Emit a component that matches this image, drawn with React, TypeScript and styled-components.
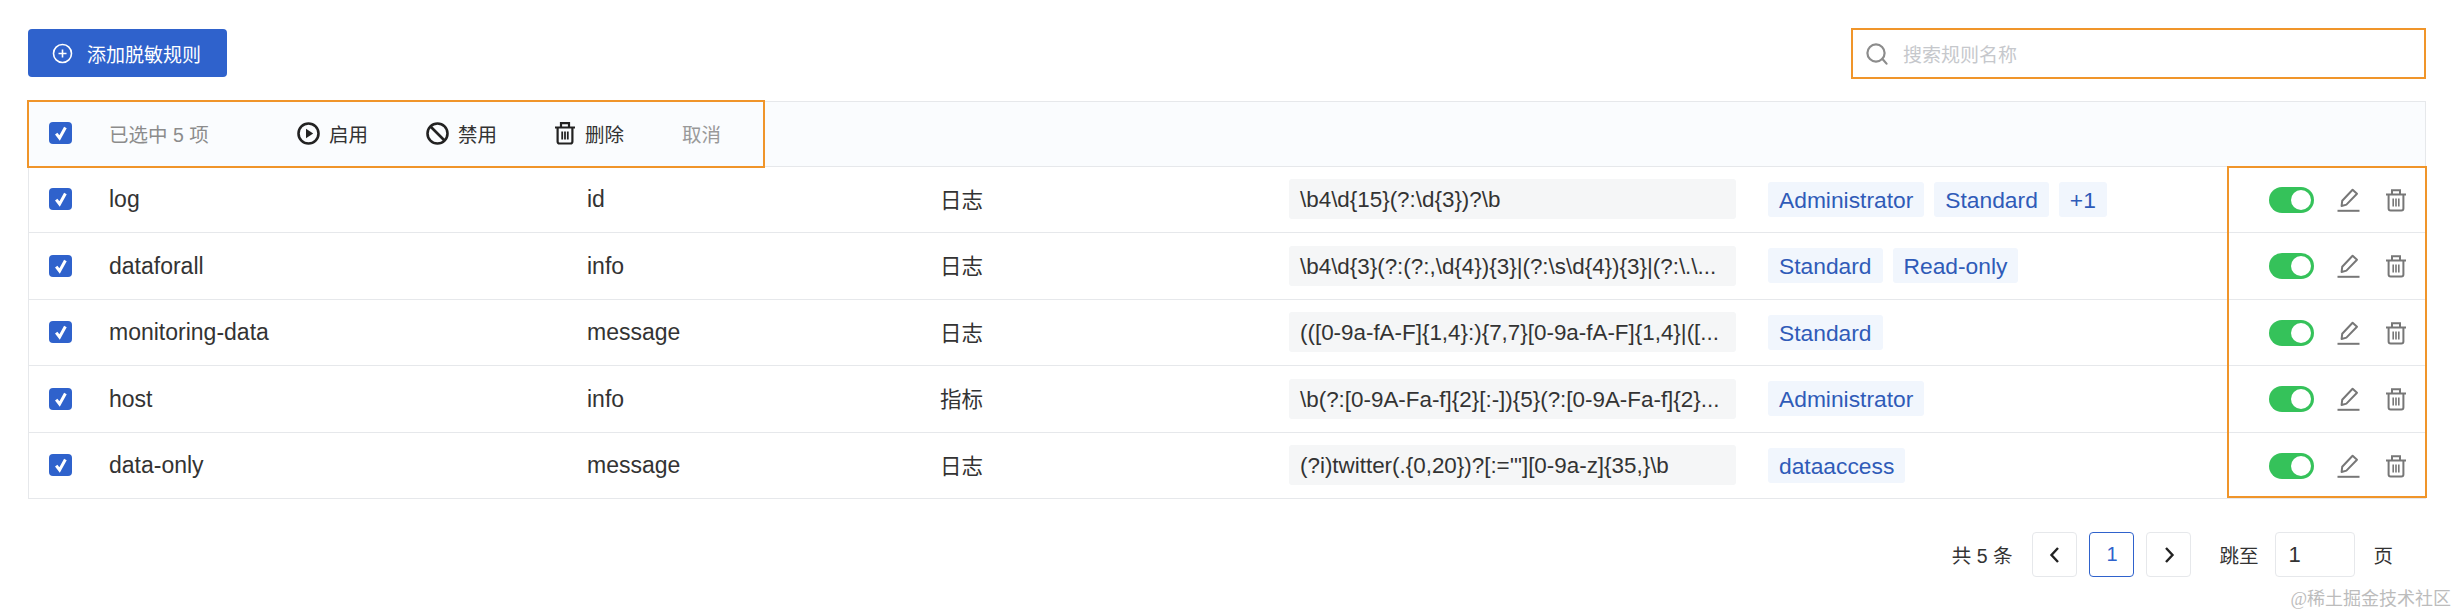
import React from "react";
import styled, { createGlobalStyle } from "styled-components";

const Global = createGlobalStyle`
  html, body { margin: 0; padding: 0; background: #fff; }
  body { font-family: "Liberation Sans", "Noto Sans CJK SC", sans-serif; color: #333; }
  * { box-sizing: border-box; }
`;

const Page = styled.div`
  position: relative;
  width: 2458px;
  height: 615px;
  padding: 28px 32px 0 28px;
  overflow: hidden;
`;

const TopBar = styled.div`
  display: flex;
  align-items: flex-start;
  justify-content: space-between;
  height: 51px;
  margin-bottom: 22px;
`;

const AddButton = styled.button`
  display: flex;
  align-items: center;
  gap: 14px;
  width: 199px;
  height: 48px;
  margin-top: 1px;
  padding: 0 0 0 24px;
  border: 0;
  border-radius: 4px;
  background: #2f62cc;
  color: #fff;
  font: inherit;
  font-size: 19px;
`;

const SearchBox = styled.div`
  display: flex;
  align-items: center;
  gap: 14px;
  width: 575px;
  height: 51px;
  padding: 0 0 0 12px;
  border: 2px solid #f0952a;
  background: #fff;
  color: #c6c8cc;
  font-size: 19px;
`;

const Table = styled.div`
  position: relative;
  width: 2398px;
  border: 1px solid #e6e8eb;
  border-bottom: 0;
`;

const BulkBar = styled.div`
  height: 64.5px;
  background: #fafcfe;
  border-bottom: 1px solid #e6e8eb;
`;

const BulkGroup = styled.div`
  display: flex;
  align-items: center;
  width: 734px;
  height: 64px;
  padding: 0 0 2px 20px;
  outline: 2px solid #f0952a;
  font-size: 19.5px;
`;

const SelectCell = styled.div`
  width: 60px;
  display: flex;
  align-items: center;
`;

const SelectedCount = styled.span`
  width: 188px;
  color: #8c8c8c;
`;

const BulkAction = styled.span<{ $w: number }>`
  display: flex;
  align-items: center;
  gap: 9px;
  width: ${(p) => p.$w}px;
  color: #333;
`;

const CancelText = styled.span`
  color: #999;
`;

const Box = styled.span`
  display: flex;
  align-items: center;
  justify-content: center;
  width: 23px;
  height: 22px;
  border-radius: 4px;
  background: #2f62cc;
`;

const Row = styled.div`
  display: grid;
  grid-template-columns: 60px 478px 353px 349px 479px 500px 1fr;
  align-items: center;
  height: 66.5px;
  padding-left: 20px;
  border-bottom: 1px solid #e6e8eb;
  font-size: 23px;
  color: #333;
`;

const LatinCell = styled.span`
  padding-top: 1px;
`;

const TypeText = styled.span`
  padding-bottom: 2px;
  font-size: 21.5px;
`;

const Pattern = styled.div`
  width: 447px;
  height: 40px;
  padding: 1px 11px 0;
  border-radius: 3px;
  background: #f5f6f7;
  font-size: 22.4px;
  line-height: 40px;
  white-space: nowrap;
  overflow: hidden;
`;

const Tags = styled.div`
  display: flex;
  gap: 10px;
`;

const Tag = styled.span`
  height: 35px;
  padding: 0 11px;
  border-radius: 3px;
  background: #f1f6fd;
  color: #2f5bb8;
  font-size: 22.8px;
  line-height: 36px;
`;

const Ops = styled.div`
  position: absolute;
  right: 18px;
  display: flex;
  align-items: center;
  gap: 24px;
`;

const EditSlot = styled.span`
  display: flex;
  margin: 0 1px 0 -1px;
`;

const RowWrap = styled.div`
  position: relative;
  display: flex;
  align-items: center;
  > :first-child { flex: 1; }
`;

const Toggle = styled.span`
  position: relative;
  display: block;
  width: 45px;
  height: 26px;
  border-radius: 13px;
  background: #35c25a;
  &::after {
    content: "";
    position: absolute;
    top: 3px;
    right: 3px;
    width: 20px;
    height: 20px;
    border-radius: 50%;
    background: #fff;
  }
`;

const Highlight = styled.div`
  position: absolute;
  top: 64px;
  right: -2px;
  width: 200px;
  height: 332px;
  border: 2px solid #f0952a;
  pointer-events: none;
`;

const Pager = styled.div`
  display: flex;
  align-items: center;
  justify-content: flex-end;
  height: 45px;
  margin-top: 33px;
  padding-right: 33px;
  font-size: 19.5px;
  color: #333;
`;

const PagerText = styled.span<{ $gap: number; $lead?: number }>`
  margin-left: ${(p) => p.$lead ?? 0}px;
  margin-right: ${(p) => p.$gap}px;
`;

const PageBtn = styled.span<{ $active?: boolean }>`
  display: flex;
  align-items: center;
  justify-content: center;
  width: 45px;
  height: 45px;
  margin-right: 12px;
  border: 1px solid ${(p) => (p.$active ? "#2f62cc" : "#e6e8eb")};
  border-radius: 4px;
  color: ${(p) => (p.$active ? "#2f62cc" : "#222")};
  font-size: 20px;
`;

const JumpInput = styled.span`
  display: flex;
  align-items: center;
  width: 80px;
  height: 45px;
  margin-right: 18px;
  padding-left: 12px;
  border: 1px solid #e6e8eb;
  border-radius: 4px;
  font-size: 22px;
`;

const Watermark = styled.div`
  position: absolute;
  right: 7px;
  bottom: 6px;
  color: #bcbcbc;
  font-family: "Liberation Serif", "Noto Sans CJK SC", serif;
  font-size: 18px;
  line-height: 20px;
`;

const Check = () => (
  <Box>
    <svg width="14" height="16" viewBox="0 0 14 16" fill="none">
      <path d="M2.2 8.6 L5.6 13 L11.4 2.6" stroke="#fff" strokeWidth="3" />
    </svg>
  </Box>
);

const PlusCircle = () => (
  <svg width="21" height="21" viewBox="0 0 21 21" fill="none" stroke="#fff" strokeWidth="1.6">
    <circle cx="10.5" cy="10.5" r="9" />
    <path d="M10.5 6.5v8M6.5 10.5h8" />
  </svg>
);

const SearchIcon = () => (
  <svg width="24" height="22" viewBox="0 0 24 22" fill="none" stroke="#8c8c8c" strokeWidth="2.2">
    <circle cx="11" cy="10" r="8.6" />
    <path d="M17.5 16l4 4.6" strokeLinecap="round" />
  </svg>
);

const PlayIcon = () => (
  <svg width="23" height="23" viewBox="0 0 23 23" fill="none">
    <circle cx="11.5" cy="11.5" r="10" stroke="#222" strokeWidth="2.6" />
    <path d="M9 6.8 L16.2 11.5 L9 16.2 Z" fill="#222" />
  </svg>
);

const BanIcon = () => (
  <svg width="23" height="23" viewBox="0 0 23 23" fill="none" stroke="#222" strokeWidth="2.6">
    <circle cx="11.5" cy="11.5" r="10" />
    <path d="M4.5 4.5l14 14" />
  </svg>
);

const TrashIcon = ({ color = "#222", w = 2.2 }: { color?: string; w?: number }) => (
  <svg width="22" height="24" viewBox="0 0 22 24" fill="none" stroke={color} strokeWidth={w}>
    <path d="M1 6.5h20M7 6V2.2h8V6" />
    <path d="M3.6 7v13.5a2 2 0 0 0 2 2h10.8a2 2 0 0 0 2-2V7" />
    <path d="M8.2 10.5v8M11 10.5v8M13.8 10.5v8" strokeWidth={w * 0.8} />
  </svg>
);

const EditIcon = () => (
  <svg width="23" height="24" viewBox="0 0 23 24" fill="none" stroke="#777" strokeWidth="2">
    <path d="M4.6 18l.6-5.2L15.6 1.8l4.4 3.9L9.4 16.6 4.6 18Z" strokeLinejoin="round" />
    <path d="M0.5 22.8h22" />
  </svg>
);

const rules = [
  { name: "log", field: "id", type: "日志", pattern: "\\b4\\d{15}(?:\\d{3})?\\b", tags: ["Administrator", "Standard", "+1"] },
  { name: "dataforall", field: "info", type: "日志", pattern: "\\b4\\d{3}(?:(?:,\\d{4}){3}|(?:\\s\\d{4}){3}|(?:\\.\\...", tags: ["Standard", "Read-only"] },
  { name: "monitoring-data", field: "message", type: "日志", pattern: "(([0-9a-fA-F]{1,4}:){7,7}[0-9a-fA-F]{1,4}|([...", tags: ["Standard"] },
  { name: "host", field: "info", type: "指标", pattern: "\\b(?:[0-9A-Fa-f]{2}[:-]){5}(?:[0-9A-Fa-f]{2}...", tags: ["Administrator"] },
  { name: "data-only", field: "message", type: "日志", pattern: "(?i)twitter(.{0,20})?[:='\"][0-9a-z]{35,}\\b", tags: ["dataaccess"] },
];

export default function App() {
  return (
    <Page>
      <Global />
      <TopBar>
        <AddButton>
          <PlusCircle />
          添加脱敏规则
        </AddButton>
        <SearchBox>
          <SearchIcon />
          搜索规则名称
        </SearchBox>
      </TopBar>

      <Table>
        <BulkBar>
          <BulkGroup>
            <SelectCell>
              <Check />
            </SelectCell>
            <SelectedCount>已选中 5 项</SelectedCount>
            <BulkAction $w={129}>
              <PlayIcon />
              启用
            </BulkAction>
            <BulkAction $w={128}>
              <BanIcon />
              禁用
            </BulkAction>
            <BulkAction $w={128}>
              <TrashIcon />
              删除
            </BulkAction>
            <CancelText>取消</CancelText>
          </BulkGroup>
        </BulkBar>

        {rules.map((r) => (
          <RowWrap key={r.name}>
            <Row>
              <SelectCell>
                <Check />
              </SelectCell>
              <LatinCell>{r.name}</LatinCell>
              <LatinCell>{r.field}</LatinCell>
              <TypeText>{r.type}</TypeText>
              <Pattern>{r.pattern}</Pattern>
              <Tags>
                {r.tags.map((t) => (
                  <Tag key={t}>{t}</Tag>
                ))}
              </Tags>
            </Row>
            <Ops>
              <Toggle />
              <EditSlot>
                <EditIcon />
              </EditSlot>
              <TrashIcon color="#777" w={2} />
            </Ops>
          </RowWrap>
        ))}
        <Highlight />
      </Table>

      <Pager>
        <PagerText $gap={20}>共 5 条</PagerText>
        <PageBtn>
          <svg width="14" height="18" viewBox="0 0 14 18" fill="none" stroke="#222" strokeWidth="2.4">
            <path d="M10 2 3.5 9l6.5 7" />
          </svg>
        </PageBtn>
        <PageBtn $active>1</PageBtn>
        <PageBtn>
          <svg width="14" height="18" viewBox="0 0 14 18" fill="none" stroke="#222" strokeWidth="2.4">
            <path d="M4 2l6.5 7L4 16" />
          </svg>
        </PageBtn>
        <PagerText $gap={17} $lead={16}>跳至</PagerText>
        <JumpInput>1</JumpInput>
        <span>页</span>
      </Pager>
      <Watermark>@稀土掘金技术社区</Watermark>
    </Page>
  );
}
